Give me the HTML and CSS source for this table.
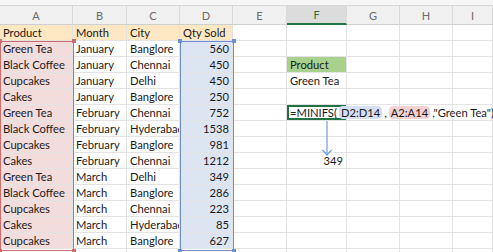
FILE: index.html
```html
<!DOCTYPE html>
<html lang="en">
<head>
  <meta charset="UTF-8" />
  <title>MINIFS example</title>
  <link rel="stylesheet" href="styles.css">
</head>
<body>
  <div class="sheet">
    <div class="topbar"></div>

    <table class="grid">
      <colgroup>
        <col class="w-a"><col class="w-b"><col class="w-c"><col class="w-d"><col class="w-e">
        <col class="w-f"><col class="w-g"><col class="w-h"><col class="w-i">
      </colgroup>
      <thead>
        <tr>
          <th>A</th><th>B</th><th>C</th><th>D</th><th>E</th>
          <th class="active">F</th><th>G</th><th>H</th><th>I</th>
        </tr>
      </thead>
      <tbody>
        <tr><td class="head">Product</td><td class="head">Month</td><td class="head">City</td><td class="head">Qty Sold</td><td></td><td></td><td></td><td></td><td></td></tr>
        <tr><td class="ra">Green Tea</td><td>January</td><td>Banglore</td><td class="rd">560</td><td></td><td></td><td></td><td></td><td></td></tr>
        <tr><td class="ra">Black Coffee</td><td>January</td><td>Chennai</td><td class="rd">450</td><td></td><td class="green">Product</td><td></td><td></td><td></td></tr>
        <tr><td class="ra">Cupcakes</td><td>January</td><td>Delhi</td><td class="rd">450</td><td></td><td>Green Tea</td><td></td><td></td><td></td></tr>
        <tr><td class="ra">Cakes</td><td>January</td><td>Banglore</td><td class="rd">250</td><td></td><td></td><td></td><td></td><td></td></tr>
        <tr><td class="ra">Green Tea</td><td>February</td><td>Chennai</td><td class="rd">752</td><td></td>
          <td class="editing">=MINIFS(<span class="ref ref-d">D2:D14</span>,<span class="ref ref-a">A2:A14</span>,"Green Tea")</td>
          <td></td><td></td><td></td></tr>
        <tr><td class="ra">Black Coffee</td><td>February</td><td>Hyderabad</td><td class="rd">1538</td><td></td><td></td><td></td><td></td><td></td></tr>
        <tr><td class="ra">Cupcakes</td><td>February</td><td>Banglore</td><td class="rd">981</td><td></td><td></td><td></td><td></td><td></td></tr>
        <tr><td class="ra">Cakes</td><td>February</td><td>Chennai</td><td class="rd">1212</td><td></td><td class="num">349</td><td></td><td></td><td></td></tr>
        <tr><td class="ra">Green Tea</td><td>March</td><td>Delhi</td><td class="rd">349</td><td></td><td></td><td></td><td></td><td></td></tr>
        <tr><td class="ra">Black Coffee</td><td>March</td><td>Banglore</td><td class="rd">286</td><td></td><td></td><td></td><td></td><td></td></tr>
        <tr><td class="ra">Cupcakes</td><td>March</td><td>Chennai</td><td class="rd">223</td><td></td><td></td><td></td><td></td><td></td></tr>
        <tr><td class="ra">Cakes</td><td>March</td><td>Hyderabad</td><td class="rd">85</td><td></td><td></td><td></td><td></td><td></td></tr>
        <tr><td class="ra">Cupcakes</td><td>March</td><td>Banglore</td><td class="rd">627</td><td></td><td></td><td></td><td></td><td></td></tr>
        <tr><td></td><td></td><td></td><td></td><td></td><td></td><td></td><td></td><td></td></tr>
      </tbody>
    </table>

    <!-- range outlines drawn over the cells while editing -->
    <div class="range range-a">
      <span class="handle tl"></span><span class="handle tr"></span>
      <span class="handle bl"></span><span class="handle br"></span>
    </div>
    <div class="range range-d">
      <span class="handle tl"></span><span class="handle tr"></span>
      <span class="handle bl"></span><span class="handle br"></span>
    </div>

    <svg class="arrow" width="12" height="38" viewBox="0 0 12 38">
      <path d="M6 0 V34" stroke="#6d9fd6" stroke-width="1.2" fill="none"/>
      <path d="M1.5 29 L6 34 L10.5 29" stroke="#6d9fd6" stroke-width="1.2" fill="none"/>
    </svg>
  </div>
</body>
</html>
```

FILE: styles.css
```css
body {
  margin: 0;
  background: #fff;
  font-family: Lato, 'Noto Sans', sans-serif;
  color: #1a1a1a;
  overflow: hidden;
}

.sheet {
  position: relative;
  width: 493px;
  height: 252px;
  overflow: hidden;
}

.topbar {
  height: 5px;
  background: #f6f6f6;
  border-bottom: 1px solid #d6d6d6;
}

.grid {
  table-layout: fixed;
  border-collapse: separate;
  border-spacing: 0;
  width: 493px;
}

.w-a { width: 73px; }
.w-b { width: 54px; }
.w-c { width: 53px; }
.w-d { width: 53px; }
.w-e { width: 54px; }
.w-f { width: 60px; }
.w-g { width: 53px; }
.w-h { width: 53px; }
.w-i { width: 40px; }

.grid th {
  height: 19px;
  padding: 0;
  box-sizing: border-box;
  background: #f0f0f0;
  border-right: 1px solid #dadada;
  border-bottom: 1px solid #cfcfcf;
  color: #6a6a6a;
  font-weight: normal;
  font-size: 11px;
  text-align: center;
}

.grid th.active {
  background: #dcdcdc;
  border-bottom: 2px solid #217346;
  color: #2f6b3f;
}

.grid td {
  height: 16px;
  padding: 0 3px;
  box-sizing: border-box;
  border-right: 1px solid #e3e3e3;
  border-bottom: 1px solid #e3e3e3;
  font-size: 11.2px;
  line-height: 15px;
  white-space: nowrap;
  overflow: hidden;
}

.grid td.head { background: #fde8c3; }
.grid td.ra { background: #f3dcdc; }
.grid td.rd { background: #dde5f3; text-align: right; }
.grid td.green { background: #a9d18e; }
.grid td.num { text-align: right; }

/* cell in edit mode: border sits under the formula text */
.grid td.editing {
  overflow: visible;
  padding-left: 3px;
  box-shadow: inset 0 0 0 2px #217346;
}

.ref {
  border-radius: 4px;
  padding: 0 2px;
  margin: 0 2px;
}

.ref-d { background: #d6e0f3; }
.ref-a { background: #f4d2d2; }

/* overlays */
.range {
  position: absolute;
  top: 41px;
  height: 210px;
  box-sizing: border-box;
  border: 1px solid;
}

.range-a { left: 0; width: 74px; border-color: #cf6b6b; }
.range-d { left: 180px; width: 54px; border-color: #6f8fcc; }

.handle {
  position: absolute;
  width: 4px;
  height: 4px;
}

.range-a .handle { background: #cf6b6b; }
.range-d .handle { background: #6f8fcc; }

.handle.tl { left: -3px; top: -3px; }
.handle.tr { right: -3px; top: -3px; }
.handle.bl { left: -3px; bottom: -3px; }
.handle.br { right: -3px; bottom: -3px; }

.arrow {
  position: absolute;
  left: 321px;
  top: 121px;
}
```
